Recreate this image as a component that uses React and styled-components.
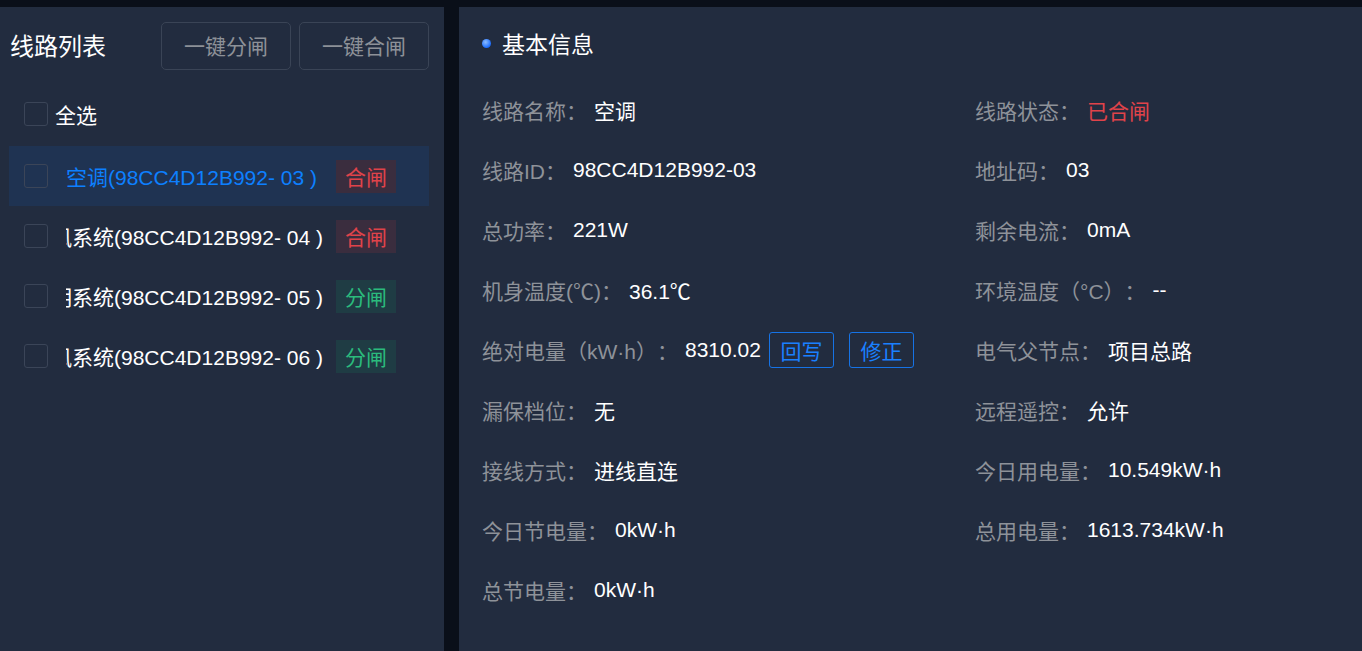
import React from 'react'
import styled, { createGlobalStyle } from 'styled-components'

const GlobalStyle = createGlobalStyle`
  html, body {
    margin: 0;
    padding: 0;
    background: #0a0f19;
    font-family: "Liberation Sans", "Noto Sans CJK SC", sans-serif;
    text-spacing-trim: space-all;
  }
  * { box-sizing: border-box; }
`

const Page = styled.div`
  display: flex;
  gap: 15px;
  height: 651px;
  padding-top: 7px;
  overflow: hidden;
`

const Panel = styled.div`
  background: #222c3f;
  height: 100%;
`

const LeftPanel = styled(Panel)`
  width: 444px;
  flex: none;
  padding: 15px 15px 0 9px;
`

const RightPanel = styled(Panel)`
  flex: 1;
  padding: 0 0 0 23px;
`

const ListHeader = styled.div`
  display: flex;
  align-items: center;
  justify-content: space-between;
  height: 48px;
`

const Title = styled.div`
  color: #fff;
  font-size: 24px;
  padding-left: 1px;
  margin-top: -3px;
`

const ButtonGroup = styled.div`
  display: flex;
  gap: 8px;
`

const GhostButton = styled.button`
  width: 130px;
  height: 48px;
  background: transparent;
  border: 1px solid #3a4456;
  border-radius: 5px;
  color: #8d9198;
  font-size: 21px;
  font-family: inherit;
  padding: 0 0 2px;
  cursor: pointer;
`

const Checkbox = styled.span`
  width: 24px;
  height: 24px;
  flex: none;
  border: 1px solid #3b4558;
  border-radius: 3px;
`

const SelectAll = styled.label`
  display: flex;
  align-items: center;
  gap: 7px;
  height: 48px;
  margin: 20px 0 8px;
  padding-left: 15px;
  color: #fff;
  font-size: 21px;
`

const Row = styled.div`
  display: flex;
  align-items: center;
  height: 60px;
  padding-left: 15px;
  background: ${({ active }) => (active ? '#1f3352' : 'transparent')};
  color: ${({ active }) => (active ? '#0d80ff' : '#fff')};
  font-size: 21px;
`

const NameBox = styled.div`
  width: 264px;
  margin-left: 18px;
  overflow: hidden;
  white-space: nowrap;
`

const Name = styled.span`
  display: inline-block;
  transform: translateX(${({ shift }) => shift}px);
`

const Tag = styled.span`
  margin-left: 6px;
  width: 60px;
  height: 33px;
  display: flex;
  align-items: center;
  justify-content: center;
  font-size: 21px;
  color: ${({ on }) => (on ? '#e0434a' : '#2bbb7d')};
  background: ${({ on }) => (on ? '#3a2d3e' : '#1f3c44')};
`

const InfoHeader = styled.div`
  display: flex;
  align-items: center;
  gap: 11px;
  height: 72px;
  color: #fff;
  font-size: 23px;
`

const Dot = styled.span`
  width: 9px;
  height: 9px;
  margin-top: 1px;
  border-radius: 50%;
  background: radial-gradient(circle at 40% 35%, #8cbcff, #1a6cff 70%);
`

const InfoGrid = styled.div`
  display: grid;
  grid-template-columns: 493px 1fr;
  grid-auto-rows: 60px;
  margin-top: 1px;
`

const Field = styled.div`
  display: flex;
  align-items: center;
  font-size: 21px;
  white-space: nowrap;
`

const Label = styled.span`
  color: #8e9299;
  margin-right: 7px;
`

const Value = styled.span`
  color: ${({ danger }) => (danger ? '#e0434a' : '#fff')};
`

const LinkButton = styled.button`
  width: 65px;
  height: 36px;
  margin-left: ${({ gap }) => gap}px;
  background: transparent;
  border: 1px solid #1673e6;
  border-radius: 3px;
  color: #1a80ff;
  font-size: 21px;
  font-family: inherit;
  padding: 0;
  cursor: pointer;
`

const lines = [
  { name: '空调(98CC4D12B992- 03 )', on: true, active: true, shift: 0 },
  { name: '新风系统(98CC4D12B992- 04 )', on: true, shift: -36 },
  { name: '照明系统(98CC4D12B992- 05 )', on: false, shift: -36 },
  { name: '排风系统(98CC4D12B992- 06 )', on: false, shift: -36 },
]

const App = () => {
  return (
    <>
      <GlobalStyle />
      <Page>
        <LeftPanel>
          <ListHeader>
            <Title>线路列表</Title>
            <ButtonGroup>
              <GhostButton>一键分闸</GhostButton>
              <GhostButton>一键合闸</GhostButton>
            </ButtonGroup>
          </ListHeader>
          <SelectAll>
            <Checkbox />
            全选
          </SelectAll>
          {lines.map((l) => (
            <Row key={l.name} active={l.active}>
              <Checkbox />
              <NameBox>
                <Name shift={l.shift}>{l.name}</Name>
              </NameBox>
              <Tag on={l.on}>{l.on ? '合闸' : '分闸'}</Tag>
            </Row>
          ))}
        </LeftPanel>
        <RightPanel>
          <InfoHeader>
            <Dot />
            基本信息
          </InfoHeader>
          <InfoGrid>
            <Field><Label>线路名称：</Label><Value>空调</Value></Field>
            <Field><Label>线路状态：</Label><Value danger>已合闸</Value></Field>
            <Field><Label>线路ID：</Label><Value>98CC4D12B992-03</Value></Field>
            <Field><Label>地址码：</Label><Value>03</Value></Field>
            <Field><Label>总功率：</Label><Value>221W</Value></Field>
            <Field><Label>剩余电流：</Label><Value>0mA</Value></Field>
            <Field><Label>机身温度(℃)：</Label><Value>36.1℃</Value></Field>
            <Field><Label>环境温度（°C）：</Label><Value>--</Value></Field>
            <Field>
              <Label>绝对电量（kW·h）：</Label>
              <Value>8310.02</Value>
              <LinkButton gap={8}>回写</LinkButton>
              <LinkButton gap={15}>修正</LinkButton>
            </Field>
            <Field><Label>电气父节点：</Label><Value>项目总路</Value></Field>
            <Field><Label>漏保档位：</Label><Value>无</Value></Field>
            <Field><Label>远程遥控：</Label><Value>允许</Value></Field>
            <Field><Label>接线方式：</Label><Value>进线直连</Value></Field>
            <Field><Label>今日用电量：</Label><Value>10.549kW·h</Value></Field>
            <Field><Label>今日节电量：</Label><Value>0kW·h</Value></Field>
            <Field><Label>总用电量：</Label><Value>1613.734kW·h</Value></Field>
            <Field><Label>总节电量：</Label><Value>0kW·h</Value></Field>
          </InfoGrid>
        </RightPanel>
      </Page>
    </>
  )
}

export default App
